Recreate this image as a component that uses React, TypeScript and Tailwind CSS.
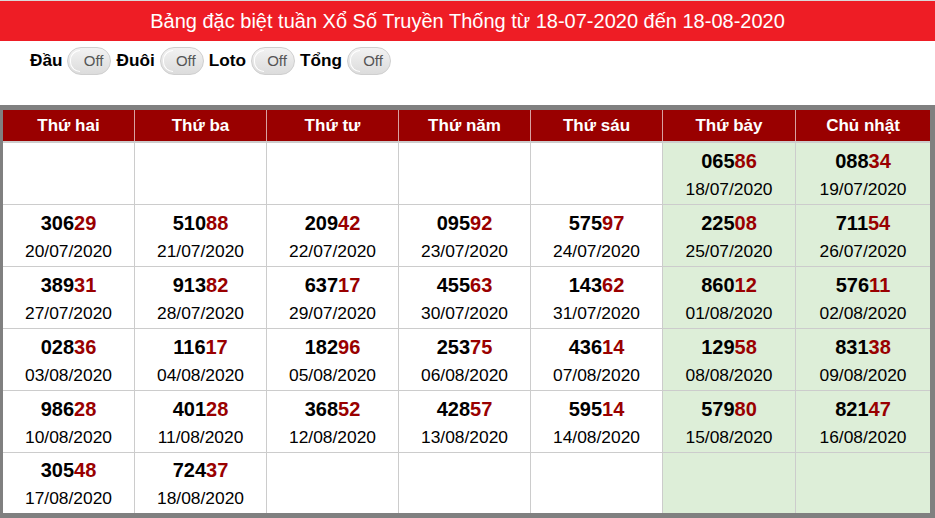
const days = ['Thứ hai', 'Thứ ba', 'Thứ tư', 'Thứ năm', 'Thứ sáu', 'Thứ bảy', 'Chủ nhật'];

type Cell = { n: string; d: string } | null;

const rows: Cell[][] = [
  [null, null, null, null, null, { n: '06586', d: '18/07/2020' }, { n: '08834', d: '19/07/2020' }],
  [
    { n: '30629', d: '20/07/2020' },
    { n: '51088', d: '21/07/2020' },
    { n: '20942', d: '22/07/2020' },
    { n: '09592', d: '23/07/2020' },
    { n: '57597', d: '24/07/2020' },
    { n: '22508', d: '25/07/2020' },
    { n: '71154', d: '26/07/2020' },
  ],
  [
    { n: '38931', d: '27/07/2020' },
    { n: '91382', d: '28/07/2020' },
    { n: '63717', d: '29/07/2020' },
    { n: '45563', d: '30/07/2020' },
    { n: '14362', d: '31/07/2020' },
    { n: '86012', d: '01/08/2020' },
    { n: '57611', d: '02/08/2020' },
  ],
  [
    { n: '02836', d: '03/08/2020' },
    { n: '11617', d: '04/08/2020' },
    { n: '18296', d: '05/08/2020' },
    { n: '25375', d: '06/08/2020' },
    { n: '43614', d: '07/08/2020' },
    { n: '12958', d: '08/08/2020' },
    { n: '83138', d: '09/08/2020' },
  ],
  [
    { n: '98628', d: '10/08/2020' },
    { n: '40128', d: '11/08/2020' },
    { n: '36852', d: '12/08/2020' },
    { n: '42857', d: '13/08/2020' },
    { n: '59514', d: '14/08/2020' },
    { n: '57980', d: '15/08/2020' },
    { n: '82147', d: '16/08/2020' },
  ],
  [{ n: '30548', d: '17/08/2020' }, { n: '72437', d: '18/08/2020' }, null, null, null, null, null],
];

const cols = 'grid grid-cols-[132px_132px_132px_132px_132px_133px_134px]';

const Toggle = ({ label }: { label: string }) => (
  <div className="flex items-center gap-[5px]">
    <span className="text-[17.2px] font-bold text-black">{label}</span>
    <div className="relative flex h-[28px] w-[44px] items-center justify-end rounded-full border border-[#cfcfcf] bg-gradient-to-b from-[#f2f2f2] to-[#dcdcdc] pr-[7px]">
      <div className="absolute left-[2px] top-[2px] h-[22px] w-[10px] rounded-l-full border-l border-t border-b border-white" />
      <span className="text-[15px] text-[#555]">Off</span>
    </div>
  </div>
);

export default function App() {
  return (
    <div className="h-[518px] w-[935px] overflow-hidden bg-white font-['Liberation_Sans',Arial,sans-serif]">
      <div className="h-px bg-[#d9d9d9]" />
      <div className="flex h-[40px] items-center justify-center bg-[#ee1d25] text-[20px] text-white">
        Bảng đặc biệt tuần Xổ Số Truyền Thống từ 18-07-2020 đến 18-08-2020
      </div>
      <div className="flex h-[40px] items-center gap-[5px] pl-[30px]">
        <Toggle label="Đầu" />
        <Toggle label="Đuôi" />
        <Toggle label="Loto" />
        <Toggle label="Tổng" />
      </div>
      <div className="mt-[24px] border-b-[5px] border-l-[3px] border-r-[5px] border-t-[5px] border-[#808080]">
        <div className={`${cols} h-[31px] bg-[#990000]`}>
          {days.map((d, i) => (
            <div
              key={d}
              className={`flex items-center justify-center text-[17px] font-bold text-white ${i < 6 ? 'border-r border-[#d8a0a0]' : ''}`}
            >
              {d}
            </div>
          ))}
        </div>
        <div className="h-[2px] bg-[#cccccc]" />
        {rows.map((row, r) => (
          <div key={r} className={`${cols} ${r < 5 ? 'h-[62px] border-b border-[#cccccc]' : 'h-[60px]'}`}>
            {row.map((c, i) => (
              <div
                key={i}
                className={`flex flex-col items-center justify-center ${i >= 5 ? 'bg-[#ddeed8]' : 'bg-white'} ${
                  i < 6 ? 'border-r border-[#cccccc]' : ''
                }`}
              >
                {c && (
                  <>
                    <div className="text-[20px] font-bold leading-[24px] text-black">
                      {c.n.slice(0, 3)}
                      <span className="text-[#990000]">{c.n.slice(3)}</span>
                    </div>
                    <div className="mt-[6px] text-[17.4px] leading-[20px] text-black">{c.d}</div>
                  </>
                )}
              </div>
            ))}
          </div>
        ))}
      </div>
    </div>
  );
}
